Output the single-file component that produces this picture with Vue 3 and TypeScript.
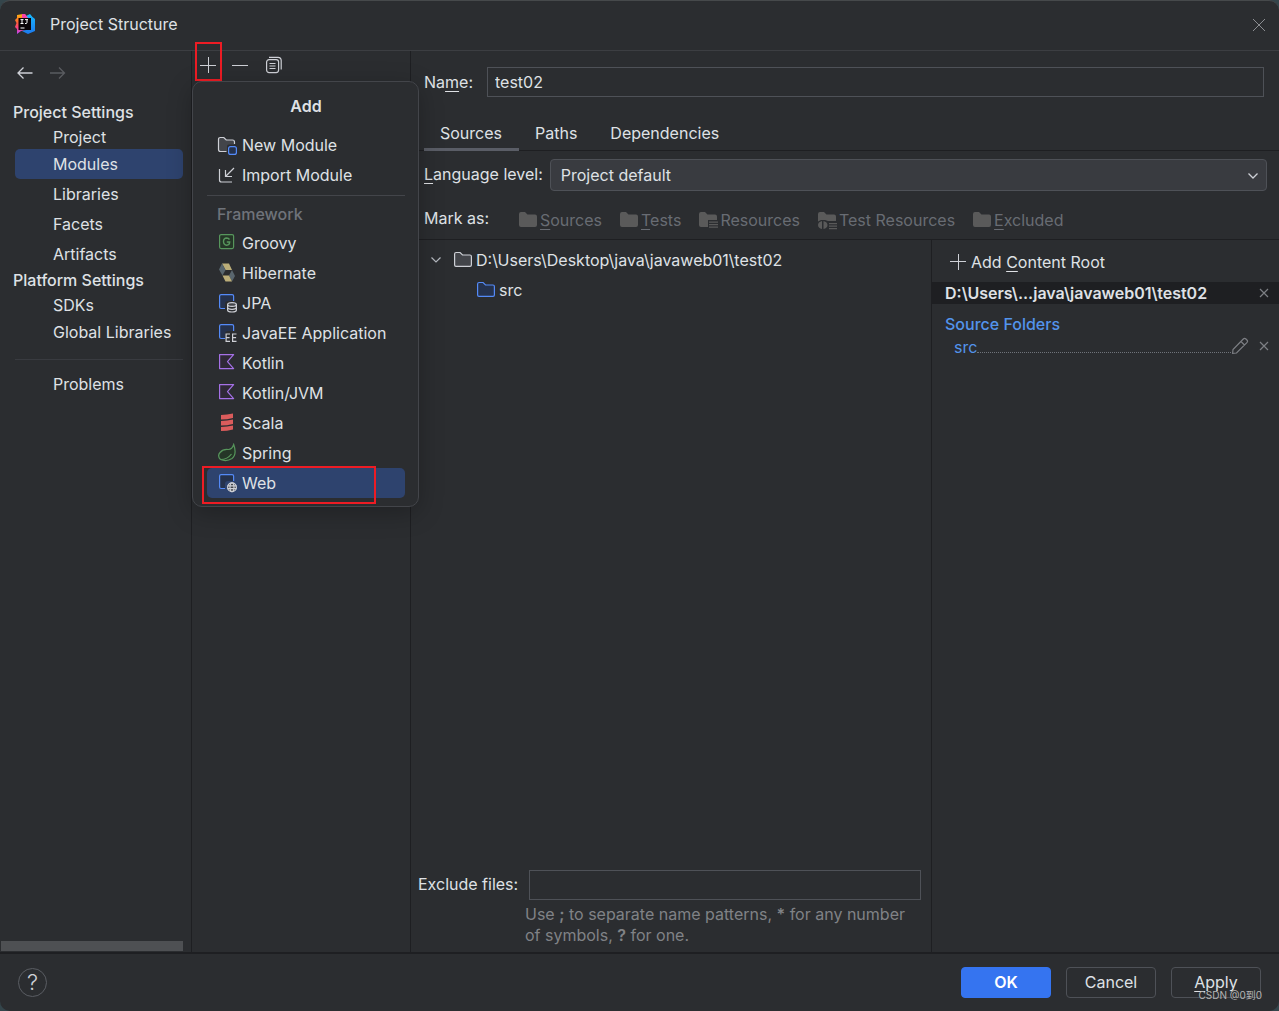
<script setup lang="ts">
import { ref } from 'vue'

interface MenuItem {
  label: string
  icon: string
}

const projectSettings = ['Project', 'Modules', 'Libraries', 'Facets', 'Artifacts']
const platformSettings = ['SDKs', 'Global Libraries']
const current = ref('Modules')

const moduleItems: MenuItem[] = [
  { label: 'New Module', icon: 'newModule' },
  { label: 'Import Module', icon: 'importModule' },
]
const frameworks: MenuItem[] = [
  { label: 'Groovy', icon: 'groovy' },
  { label: 'Hibernate', icon: 'hibernate' },
  { label: 'JPA', icon: 'jpa' },
  { label: 'JavaEE Application', icon: 'javaee' },
  { label: 'Kotlin', icon: 'kotlin' },
  { label: 'Kotlin/JVM', icon: 'kotlin' },
  { label: 'Scala', icon: 'scala' },
  { label: 'Spring', icon: 'spring' },
  { label: 'Web', icon: 'web' },
]

const tabs = ['Sources', 'Paths', 'Dependencies']
const activeTab = ref('Sources')

const marks = [
  { key: 'S', rest: 'ources', kind: 'plain' },
  { key: 'T', rest: 'ests', kind: 'plain' },
  { key: '', rest: 'Resources', kind: 'res' },
  { key: '', rest: 'Test Resources', kind: 'testres' },
  { key: 'E', rest: 'xcluded', kind: 'plain' },
]

const moduleName = ref('test02')
const languageLevel = ref('Project default')
const excludeFiles = ref('')
</script>

<template>
  <div class="window">
    <header class="titlebar">
      <svg class="logo" width="20" height="20" viewBox="0 0 20 20">
        <defs>
          <linearGradient id="lgWarm" x1="0" y1="0" x2="0" y2="1">
            <stop offset="0" stop-color="#fdb60d" />
            <stop offset="0.450" stop-color="#fc5a3c" />
            <stop offset="0.700" stop-color="#f8418a" />
            <stop offset="1" stop-color="#b74af7" />
          </linearGradient>
          <linearGradient id="lgCool" x1="0" y1="0" x2="0" y2="1">
            <stop offset="0" stop-color="#18b8fb" />
            <stop offset="1" stop-color="#1c79ee" />
          </linearGradient>
        </defs>
        <path d="M2 1 8 0l3 2v14l-5 1-4 3v-5l-2-2 1.500-4L0 6l2-2Z" fill="url(#lgWarm)" />
        <path d="m11 2 4-2 2.500 3L20 5v12l-7 3-6-3 4-1Z" fill="url(#lgCool)" />
        <path d="m7 0 3-.2L13 4H7Z" fill="#fb43a5" />
        <path d="M3.500 4H16v12H3.500Z" fill="#0b0508" />
        <path d="M5.500 5.600h3M7 5.600v4M5.500 9.500h3M10 5.600h3M12 5.600v2.900q0 1-1 1h-1M5.500 14h4" fill="none" stroke="#fff" />
      </svg>
      <h1>Project Structure</h1>
      <button class="icon-btn close" aria-label="Close">
        <svg width="14" height="14" viewBox="0 0 14 14"><path d="m1 1 12 12M13 1 1 13" stroke="#8c8e92" fill="none" /></svg>
      </button>
    </header>

    <main class="body">
      <nav class="sidebar">
        <div class="history">
          <button class="icon-btn" aria-label="Back">
            <svg width="16" height="14" viewBox="0 0 16 14"><path d="M15.500 7H1.500M6.500 1.500 1 7l5.500 5.500" fill="none" stroke="#ced0d6" stroke-width="1.300" /></svg>
          </button>
          <button class="icon-btn" aria-label="Forward" disabled>
            <svg width="16" height="14" viewBox="0 0 16 14"><path d="M0 7h14M9 1.500 14.500 7 9 12.500" fill="none" stroke="#5a5c60" stroke-width="1.300" /></svg>
          </button>
        </div>
        <h2>Project Settings</h2>
        <button
          v-for="(item, i) in projectSettings"
          :key="item"
          class="nav-item"
          :class="{ compact: i === 0, active: current === item }"
          @click="current = item"
        >{{ item }}</button>
        <h2>Platform Settings</h2>
        <button
          v-for="(item, i) in platformSettings"
          :key="item"
          class="nav-item"
          :class="{ compact: i === 0, active: current === item }"
          @click="current = item"
        >{{ item }}</button>
        <hr class="nav-rule" />
        <button class="nav-item">Problems</button>
        <div class="scrollbar"></div>
      </nav>

      <section class="modules">
        <div class="toolbar">
          <button class="icon-btn add-btn" aria-label="Add">
            <svg width="16" height="16" viewBox="0 0 16 16"><path d="M8.500 0v16M0 8.500h16" stroke="#ced0d6" fill="none" /></svg>
            <span class="mark mark-add"></span>
          </button>
          <button class="icon-btn" aria-label="Remove">
            <svg width="16" height="16" viewBox="0 0 16 16"><path d="M0 8.500h16" stroke="#ced0d6" fill="none" /></svg>
          </button>
          <button class="icon-btn" aria-label="Copy">
            <svg width="16" height="18" viewBox="0 0 16 18" fill="none" stroke="#ced0d6" stroke-width="1.200">
              <rect x="0.600" y="3.600" width="12" height="13" rx="2.500" />
              <path d="M3 1.400h9q3.200 0 3.200 3.200v9M3.500 7.500h6M3.500 10h6M3.500 12.500h6" />
            </svg>
          </button>
        </div>

        <div class="popup" role="menu" aria-label="Add">
          <div class="popup-title">Add</div>
          <button v-for="m in moduleItems" :key="m.label" class="menu-item" role="menuitem">
            <svg v-if="m.icon === 'newModule'" width="20" height="20" viewBox="0 0 20 20" fill="none">
              <path d="M10 16.500H3.500q-2 0-2-2v-10q0-2 2-2h3.300l2.400 2.500h6.300q2 0 2 2v2.500H12q-2 0-2 2Z" fill="#43454a" />
              <path d="M9.500 16.500h-6q-2 0-2-2v-10q0-2 2-2h3.300l2.400 2.500h6.300q2 0 2 2V9" stroke="#ced0d6" stroke-width="1.200" />
              <rect x="11.600" y="11.600" width="7.800" height="7.800" rx="2" fill="#25324d" stroke="#548af7" stroke-width="1.200" />
            </svg>
            <svg v-else width="20" height="20" viewBox="0 0 20 20" fill="none" stroke="#ced0d6" stroke-width="1.200">
              <path d="M2.500 4v11q0 2 2 2H15M17 3l-8 8M8.500 5v6.500H15" />
            </svg>
            <span>{{ m.label }}</span>
          </button>
          <hr class="menu-rule" />
          <div class="menu-group">Framework</div>
          <button
            v-for="f in frameworks"
            :key="f.label"
            class="menu-item"
            :class="{ selected: f.label === 'Web' }"
            role="menuitem"
          >
            <svg v-if="f.icon === 'groovy'" width="20" height="20" viewBox="0 0 20 20" fill="none">
              <rect x="2.600" y="1.600" width="14" height="14" rx="1.500" fill="#253627" stroke="#57965c" stroke-width="1.200" />
              <path d="M12.500 6.500Q11.500 5 9.700 5 6.500 5.200 6.500 8.600t3.200 3.600q2.800 0 3-3.200H9.800" stroke="#57965c" stroke-width="1.400" />
            </svg>
            <svg v-else-if="f.icon === 'hibernate'" width="20" height="20" viewBox="0 0 20 20">
              <path d="M5 .5h7l3 6.500H8.500Z" fill="#bcae79" />
              <path d="M5 .5 2 6.500l3.500 6L8.500 7Z" fill="#59666e" />
              <path d="m15 7 3 6-3 5.500-3-6Z" fill="#59666e" />
              <path d="M5.500 12.500H12l3 6H8.500Z" fill="#bcae79" />
            </svg>
            <svg v-else-if="f.icon === 'kotlin'" width="20" height="20" viewBox="0 0 20 20">
              <path d="M2.600 1.600h14L10.500 8.600l6.100 7h-14Z" fill="#2f2936" stroke="#a571e6" stroke-width="1.200" stroke-linejoin="round" />
            </svg>
            <svg v-else-if="f.icon === 'scala'" width="20" height="20" viewBox="0 0 20 20" fill="#db5c5c">
              <path d="M4 2q6-.2 12-1.500v4.400q-6 1.500-12 1.600ZM4 8q6-.2 12-1.500v4.400q-6 1.500-12 1.600ZM4 14q6-.2 12-1.500v3.900q-6 1.500-12 1.600Z" />
            </svg>
            <svg v-else-if="f.icon === 'spring'" width="20" height="20" viewBox="0 0 20 20" fill="none" stroke="#57965c" stroke-width="1.200">
              <path d="M16.700 1.500q3.500 10-1.700 14Q9.500 19 3.500 16.500 0 13 3 9.500q3-3.500 8-3 4 .3 5.700-5Z" fill="#253627" />
              <path d="M3.500 16.500q7 0 11-5.500" />
            </svg>
            <svg v-else width="20" height="20" viewBox="0 0 20 20" fill="none">
              <path d="M8 15.500H4.600q-2 0-2-2v-10q0-2 2-2h10q2 0 2 2V8H11q-3 0-3 3Z" fill="#25324d" />
              <path d="M8 15.500H4.100q-1.500 0-1.500-1.500V3q0-1.400 1.500-1.400h11q1.500 0 1.500 1.400v5" stroke="#548af7" stroke-width="1.200" />
              <g v-if="f.icon === 'jpa'" stroke="#ced0d6" stroke-width="1.200">
                <ellipse cx="15" cy="11.500" rx="4.400" ry="1.900" fill="#43454a" />
                <path d="M10.600 11.500v5.500q0 2 4.400 2t4.400-2v-5.500M10.600 14.300q0 2 4.400 2t4.400-2" />
              </g>
              <g v-else-if="f.icon === 'javaee'" stroke="#ced0d6" stroke-width="1.200">
                <path d="M13 11H9.100v7.400H13M9.100 14.700h3.500M19.500 11h-3.900v7.400h3.900M15.600 14.700h3.500" />
              </g>
              <g v-else stroke="#ced0d6" stroke-width="1.200">
                <circle cx="15" cy="14.300" r="4.400" fill="#43454a" />
                <ellipse cx="15" cy="14.300" rx="2" ry="4.400" />
                <path d="M10.600 12.900h8.800M10.600 15.700h8.800" />
              </g>
            </svg>
            <span>{{ f.label }}</span>
            <span v-if="f.label === 'Web'" class="mark mark-web"></span>
          </button>
        </div>
      </section>

      <section class="editor">
        <div class="name-row">
          <label for="module-name">Na<u>m</u>e:</label>
          <input id="module-name" v-model="moduleName" type="text" />
        </div>

        <div class="tabs" role="tablist">
          <button
            v-for="t in tabs"
            :key="t"
            class="tab"
            role="tab"
            :aria-selected="activeTab === t"
            :class="{ on: activeTab === t }"
            @click="activeTab = t"
          >{{ t }}</button>
        </div>

        <div class="level-row">
          <label for="level"><u>L</u>anguage level:</label>
          <div class="select-box">
            <select id="level" v-model="languageLevel">
              <option>Project default</option>
            </select>
            <svg width="12" height="8" viewBox="0 0 12 8"><path d="m1.500 1.500 4.500 4.500 4.500-4.500" fill="none" stroke="#ced0d6" stroke-width="1.300" /></svg>
          </div>
        </div>

        <div class="mark-row">
          <span class="mark-label">Mark as:</span>
          <button v-for="m in marks" :key="m.rest" class="mark-btn" disabled>
            <svg width="20" height="20" viewBox="0 0 20 20" fill="#5a5a5a">
              <path v-if="m.kind === 'plain'" d="M1 4q0-2 2-2h4l2.500 2.500H17q2 0 2 2V15q0 2-2 2H3q-2 0-2-2Z" />
              <path v-else-if="m.kind === 'res'" d="M1 4q0-2 2-2h4l2.500 2.500H17q2 0 2 2V10h-9v7H3q-2 0-2-2ZM11 11.500h9v1.300h-9ZM11 14h9v1.300h-9ZM11 16.500h9v1.300h-9Z" />
              <path v-else d="M1 4q0-2 2-2h4l2.500 2.500H17q2 0 2 2V11h-8L8 10H4l-3 1.500ZM5 11v8q-4-1-4-4t4-4ZM6.500 11v8q4-1 4-4t-4-4ZM12 13h8v1.300h-8ZM12 15.500h8v1.300h-8ZM12 18h8v1.300h-8Z" />
            </svg>
            <span><u v-if="m.key">{{ m.key }}</u>{{ m.rest }}</span>
          </button>
        </div>

        <div class="split">
          <div class="tree-pane">
            <div class="tree" role="tree">
              <div class="tree-row" role="treeitem" aria-expanded="true">
                <svg class="chevron" width="12" height="8" viewBox="0 0 12 8"><path d="m1.500 1.500 4.500 4.500 4.500-4.500" fill="none" stroke="#b4b8bf" stroke-width="1.200" /></svg>
                <svg width="20" height="20" viewBox="0 0 20 20"><path d="M1.600 4q0-1.500 1.500-1.500h4L9.500 5H17q1.400 0 1.400 1.400V15q0 1.400-1.400 1.400H3q-1.400 0-1.400-1.400Z" fill="#43454a" stroke="#ced0d6" stroke-width="1.200" /></svg>
                <span>D:\Users\Desktop\java\javaweb01\test02</span>
              </div>
              <div class="tree-row child" role="treeitem">
                <svg width="20" height="20" viewBox="0 0 20 20"><path d="M1.600 4q0-1.500 1.500-1.500h4L9.500 5H17q1.400 0 1.400 1.400V15q0 1.400-1.400 1.400H3q-1.400 0-1.400-1.400Z" fill="#25324d" stroke="#548af7" stroke-width="1.200" /></svg>
                <span>src</span>
              </div>
            </div>
            <div class="exclude-row">
              <label for="exclude">Exclude files:</label>
              <input id="exclude" v-model="excludeFiles" type="text" />
            </div>
            <p class="hint">Use <b>;</b> to separate name patterns, <b>*</b> for any number<br />of symbols, <b>?</b> for one.</p>
          </div>

          <aside class="roots">
            <button class="add-root">
              <svg width="16" height="16" viewBox="0 0 16 16"><path d="M8.500 0v16M0 7.500h16" stroke="#ced0d6" fill="none" /></svg>
              <span>Add <u>C</u>ontent Root</span>
            </button>
            <div class="root-row">
              <strong>D:\Users\...java\javaweb01\test02</strong>
              <button class="icon-btn" aria-label="Remove content root">
                <svg width="10" height="10" viewBox="0 0 10 10"><path d="m1 1 8 8M9 1 1 9" stroke="#7d7f84" stroke-width="1.200" /></svg>
              </button>
            </div>
            <h3>Source Folders</h3>
            <div class="folder-row">
              <a href="#src">src</a>
              <span class="dots"></span>
              <button class="icon-btn pencil" aria-label="Edit properties">
                <svg width="18" height="18" viewBox="0 0 18 18" fill="none" stroke="#7d7f84" stroke-width="1.200"><path d="M1.600 16.400 2 12.500 12.300 2q1.300-1.200 2.600 0l1 1q1.300 1.300 0 2.600L5.500 16ZM10 4.500 13.500 8" /></svg>
              </button>
              <button class="icon-btn" aria-label="Remove source folder">
                <svg width="10" height="10" viewBox="0 0 10 10"><path d="m1 1 8 8M9 1 1 9" stroke="#7d7f84" stroke-width="1.200" /></svg>
              </button>
            </div>
          </aside>
        </div>
      </section>
    </main>

    <footer class="footer">
      <button class="help" aria-label="Help">?</button>
      <div class="actions">
        <button class="btn primary">OK</button>
        <button class="btn">Cancel</button>
        <button class="btn"><u>A</u>pply</button>
      </div>
      <span class="watermark">CSDN @0到0</span>
    </footer>
  </div>
</template>

<style>
body {
  margin: 0;
  background: #34454b;
}
</style>

<style scoped>
.window,
.window * {
  box-sizing: border-box;
}
.window {
  min-height: 100vh;
  display: flex;
  flex-direction: column;
  background: #2b2d30;
  color: #dfe1e5;
  font-family: Inter, "Noto Sans CJK SC", sans-serif;
  font-size: 16px;
  line-height: 20px;
  border-top: 1px solid #46494b;
  border-radius: 10px;
  overflow: hidden;
}
button,
input,
select {
  font: inherit;
  color: inherit;
  margin: 0;
}
button {
  background: none;
  border: 0;
  padding: 0;
  text-align: left;
  white-space: nowrap;
}
u {
  text-decoration: underline;
  text-underline-offset: 3px;
  text-decoration-thickness: 1px;
}
svg {
  display: block;
  flex: none;
}
h1,
h2,
h3,
p {
  margin: 0;
  font-size: 16px;
  font-weight: 400;
}
.icon-btn {
  display: flex;
  align-items: center;
  justify-content: center;
  flex: none;
}

.titlebar {
  height: 50px;
  display: flex;
  align-items: center;
  gap: 15px;
  padding: 0 13px 3px 15px;
  border-bottom: 1px solid #3c3e42;
}
.close {
  margin-left: auto;
  padding-top: 2px;
}

.body {
  flex: 1;
  display: flex;
  min-height: 0;
}
.sidebar {
  width: 192px;
  flex: none;
  display: flex;
  flex-direction: column;
  border-right: 1px solid #1e1f22;
}
.history {
  height: 50px;
  display: flex;
  gap: 17px;
  padding: 15px 17px 21px;
}
h2 {
  padding-left: 13px;
  height: 23px;
  line-height: 23px;
  font-weight: 500;
}
.nav-item {
  margin: 0 8px 0 15px;
  padding-left: 38px;
  height: 30px;
  border-radius: 5px;
}
.nav-item.compact {
  height: 25px;
}
.nav-item.active {
  background: #2e436e;
}
.nav-rule {
  width: 168px;
  height: 1px;
  margin: 12px 8px 9px 15px;
  border: 0;
  background: #393b40;
}
.scrollbar {
  width: 182px;
  height: 10px;
  margin: auto 0 1px 1px;
  background: #4e5053;
}

.modules {
  position: relative;
  width: 219px;
  flex: none;
  border-right: 1px solid #1e1f22;
}
.toolbar {
  height: 28px;
  display: flex;
  align-items: center;
  gap: 16px;
  padding-left: 8px;
}
.toolbar .icon-btn:last-child {
  margin-left: 2px;
}
.add-btn {
  position: relative;
}
.mark {
  position: absolute;
  border: 2px solid #ed1c24;
  pointer-events: none;
}
.mark-add {
  top: -15px;
  left: -5px;
  width: 27px;
  height: 39px;
}
.mark-web {
  top: -2px;
  left: -5px;
  width: 174px;
  height: 38px;
}

.popup {
  position: absolute;
  z-index: 2;
  top: 30px;
  left: 0;
  width: 227px;
  padding: 0 13px 8px 14px;
  background: #2b2d30;
  border: 1px solid #43454a;
  border-radius: 10px;
  box-shadow: 0 6px 24px rgba(0, 0, 0, 0.25);
}
.popup-title {
  height: 48px;
  line-height: 48px;
  text-align: center;
  font-weight: 600;
}
.menu-item {
  position: relative;
  display: flex;
  align-items: center;
  gap: 5px;
  width: 100%;
  height: 30px;
  padding-left: 10px;
  border-radius: 5px;
}
.menu-item.selected {
  background: #2e436e;
}
.menu-rule {
  height: 1px;
  margin: 5px 0;
  border: 0;
  background: #43454a;
}
.menu-group {
  height: 27px;
  line-height: 27px;
  padding-left: 10px;
  color: #6f737a;
  font-weight: 500;
}

.editor {
  flex: 1;
  min-width: 0;
  display: flex;
  flex-direction: column;
}
.name-row {
  display: flex;
  align-items: center;
  gap: 14px;
  padding: 16px 15px 0 13px;
}
input {
  flex: 1;
  min-width: 0;
  height: 30px;
  padding: 0 7px;
  background: transparent;
  border: 1px solid #4e5157;
  border-radius: 0;
}
.tabs {
  display: flex;
  height: 35px;
  margin-top: 19px;
  padding-left: 13px;
  border-bottom: 1px solid #1e1f22;
}
.tab {
  height: 35px;
  padding: 2px 17px 0 16px;
  border-bottom: 3px solid transparent;
}
.tab.on {
  border-bottom-color: #5a5d66;
}
.level-row {
  display: flex;
  align-items: center;
  gap: 7px;
  padding: 8px 12px 0 13px;
}
.level-row label {
  padding-bottom: 2px;
}
.select-box {
  position: relative;
  flex: 1;
}
select {
  display: block;
  width: 100%;
  height: 32px;
  padding: 0 10px;
  appearance: none;
  background: #393b40;
  border: 1px solid #4e5157;
  border-radius: 4px;
}
.select-box svg {
  position: absolute;
  right: 8px;
  top: 13px;
  pointer-events: none;
}
.mark-row {
  display: flex;
  align-items: center;
  height: 49px;
  padding: 10px 0 0 13px;
  border-bottom: 1px solid #1e1f22;
}
.mark-label {
  width: 94px;
  padding-bottom: 4px;
}
.mark-btn {
  display: flex;
  align-items: center;
  gap: 2px;
  margin-right: 17px;
  color: #686c73;
}

.split {
  flex: 1;
  display: flex;
}
.tree-pane {
  flex: 1;
  min-width: 0;
  display: flex;
  flex-direction: column;
  border-right: 1px solid #1e1f22;
}
.tree {
  flex: 1;
  padding-top: 5px;
}
.tree-row {
  display: flex;
  align-items: center;
  gap: 3px;
  height: 30px;
  padding-left: 19px;
}
.tree-row .chevron {
  margin-right: 8px;
}
.tree-row.child {
  padding-left: 65px;
}
.exclude-row {
  display: flex;
  align-items: center;
  gap: 11px;
  padding: 0 10px 0 7px;
}
.exclude-row label {
  padding-bottom: 2px;
}
.hint {
  padding: 4px 0 6px 114px;
  line-height: 21px;
  color: #808286;
}
.hint b {
  font-weight: 600;
}
.roots {
  width: 347px;
  flex: none;
}
.add-root {
  display: flex;
  align-items: center;
  gap: 5px;
  height: 42px;
  padding: 2px 0 0 18px;
}
.root-row {
  display: flex;
  align-items: center;
  justify-content: space-between;
  height: 22px;
  padding: 0 10px 0 13px;
  background: #1e1f22;
}
strong {
  font-weight: 600;
}
h3 {
  height: 32px;
  padding-left: 13px;
  line-height: 40px;
  color: #5394ec;
  font-weight: 500;
}
.folder-row {
  display: flex;
  align-items: center;
  height: 22px;
  padding: 0 10px 0 22px;
}
.folder-row .icon-btn {
  padding-bottom: 2px;
}
a {
  color: #5394ec;
  text-decoration: none;
}
.dots {
  flex: 1;
  height: 12px;
  border-bottom: 1px dotted #6f737a;
}
.pencil {
  margin-right: 10px;
}

.footer {
  position: relative;
  display: flex;
  align-items: center;
  justify-content: space-between;
  height: 59px;
  padding: 0 18px 1px;
  border-top: 2px solid #1e1f22;
}
.help {
  width: 29px;
  height: 29px;
  border: 1px solid #5a5d63;
  border-radius: 50%;
  text-align: center;
  font-size: 22px;
  font-weight: 300;
  line-height: 26px;
  color: #ced0d6;
}
.actions {
  display: flex;
  gap: 15px;
}
.btn {
  width: 90px;
  height: 31px;
  border: 1px solid #4e5157;
  border-radius: 4px;
  text-align: center;
}
.btn.primary {
  background: #3574f0;
  border-color: #3574f0;
  color: #fff;
  font-weight: 600;
}
.watermark {
  position: absolute;
  right: 17px;
  bottom: 8px;
  font-size: 10px;
  line-height: 16px;
  color: #b4b4b4;
  pointer-events: none;
}
</style>
